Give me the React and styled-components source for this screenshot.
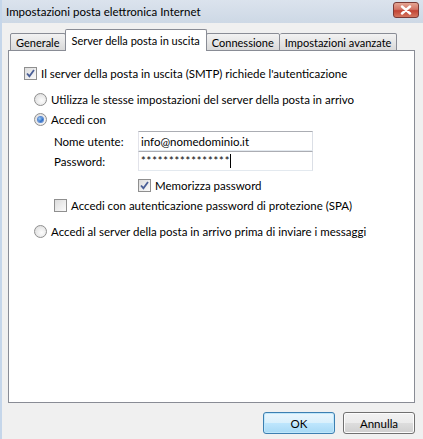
import React from 'react';
import styled, { createGlobalStyle } from 'styled-components';

const GlobalStyle = createGlobalStyle`
  html, body {
    margin: 0;
    padding: 0;
    background: #f0f0f0;
  }
  body {
    font-family: Lato, "Open Sans", sans-serif;
    font-size: 11.5px;
    color: #000;
  }
`;

const Window = styled.div`
  width: 423px;
  height: 439px;
  box-sizing: border-box;
  background: #f0f0f0;
  border-left: 2px solid #c5d6ea;
  display: flex;
  flex-direction: column;
`;

const TitleBar = styled.div`
  height: 23px;
  display: flex;
  align-items: center;
  justify-content: space-between;
  padding: 0 4px 0 4px;
  background: linear-gradient(#dbe3ed, #cdd8e5);
  font-size: 11.5px;
`;

const CloseButton = styled.div`
  width: 26px;
  height: 16px;
  margin-top: -3px;
  box-sizing: border-box;
  border: 1px solid #7a3a36;
  border-radius: 3px;
  background: linear-gradient(#e5a593, #d27567 45%, #c24434 55%, #d5765f);
  display: flex;
  align-items: center;
  justify-content: center;
`;

const Body = styled.div`
  padding: 6px 6px 0 6px;
  display: flex;
  flex-direction: column;
`;

const TabRow = styled.div`
  display: flex;
  align-items: flex-end;
  height: 22px;
  padding-left: 2px;
  margin-bottom: -1px;
  position: relative;
  z-index: 1;
  font-size: 11px;
`;

const Tab = styled.div`
  box-sizing: border-box;
  height: ${p => (p.$active ? '22px' : '18px')};
  padding: ${p => (p.$active ? '0 6px' : '0 5px')};
  margin: ${p => (p.$active ? '0 -1px' : '0')};
  display: flex;
  align-items: center;
  border: 1px solid #898c95;
  border-bottom: ${p => (p.$active ? 'none' : '1px solid #898c95')};
  border-left: ${p => (p.$inner ? 'none' : '1px solid #898c95')};
  border-radius: 2px 2px 0 0;
  background: ${p => (p.$active ? '#fff' : 'linear-gradient(#f2f2f2, #e6e6e6 50%, #d9d9d9)')};
  white-space: nowrap;
  position: relative;
  z-index: ${p => (p.$active ? 2 : 1)};
`;

const Panel = styled.div`
  height: 353px;
  width: 407px;
  box-sizing: border-box;
  background: #fff;
  border: 1px solid #898c95;
  padding-top: 12px;
  display: flex;
  flex-direction: column;
`;

const Row = styled.div`
  height: 20px;
  display: flex;
  align-items: center;
  padding-left: ${p => p.$indent}px;
  margin-top: ${p => p.$space || 0}px;
  white-space: nowrap;
`;

const FieldRow = styled.div`
  display: grid;
  grid-template-columns: 84px 175px;
  align-items: center;
  height: 20px;
  padding-left: 45px;
  margin-top: ${p => p.$space || 0}px;
`;

const Input = styled.div`
  box-sizing: border-box;
  height: 20px;
  border: 1px solid #abadb3;
  border-left-color: #e2e3ea;
  border-right-color: #dbdfe6;
  border-bottom-color: #e3e9ef;
  padding-left: 2px;
  display: flex;
  align-items: center;
`;

const Stars = styled.span`
  font-size: 11px;
  letter-spacing: 0.9px;
  margin-top: -2px;
`;

const Caret = styled.span`
  display: inline-block;
  width: 1px;
  height: 14px;
  background: #000;
`;

const Box = styled.span`
  width: 13px;
  height: 13px;
  box-sizing: border-box;
  border: 1px solid #8f8f8f;
  background: linear-gradient(135deg, #dcdcdc, #fbfbfb);
  margin-right: 4px;
  display: inline-flex;
  align-items: center;
  justify-content: center;
  flex-shrink: 0;
`;

const Radio = styled.span`
  width: 13px;
  height: 13px;
  box-sizing: border-box;
  border-radius: 50%;
  border: 1px solid #8f8f8f;
  background: radial-gradient(circle at 60% 60%, #fdfdfd, #d7d7d7);
  margin-right: 4px;
  display: inline-flex;
  align-items: center;
  justify-content: center;
  flex-shrink: 0;
`;

const Dot = styled.span`
  width: 5px;
  height: 5px;
  border-radius: 50%;
  background: radial-gradient(circle at 35% 35%, #9fd0f7, #1d5fbf 70%);
  box-shadow: 0 0 0 1px #5b8ad3;
`;

const Footer = styled.div`
  display: flex;
  justify-content: flex-end;
  gap: 8px;
  padding: 9px 8px 0 0;
`;

const Button = styled.div`
  width: 72px;
  height: 22px;
  box-sizing: border-box;
  border: 1px solid ${p => (p.$default ? '#3c7fb1' : '#707070')};
  border-radius: 3px;
  background: ${p =>
    p.$default
      ? 'linear-gradient(#eaf6fd, #d9f0fc 50%, #bee6fd 51%, #a7d9f5)'
      : 'linear-gradient(#f2f2f2, #ebebeb 50%, #dddddd 51%, #cfcfcf)'};
  box-shadow: inset 0 0 0 1px ${p => (p.$default ? '#bfe7fb' : '#fcfcfc')};
  display: flex;
  align-items: center;
  justify-content: center;
`;

const Check = () => (
  <svg width="9" height="9" viewBox="0 0 9 9">
    <path d="M1 4.5 L3.4 7.2 L8 1" fill="none" stroke="#4a5f97" strokeWidth="1.8" />
  </svg>
);

const Checkbox = ({ checked }) => <Box>{checked && <Check />}</Box>;

const RadioButton = ({ checked }) => <Radio>{checked && <Dot />}</Radio>;

const App = () => (
  <>
    <GlobalStyle />
    <Window>
      <TitleBar>
        <span>Impostazioni posta elettronica Internet</span>
        <CloseButton>
          <svg width="12" height="10" viewBox="0 0 12 10">
            <path d="M2 1.5 L10 8.5 M10 1.5 L2 8.5" stroke="#fff" strokeWidth="2.4" strokeLinecap="round" />
          </svg>
        </CloseButton>
      </TitleBar>
      <Body>
        <TabRow>
          <Tab>Generale</Tab>
          <Tab $active>Server della posta in uscita</Tab>
          <Tab>Connessione</Tab>
          <Tab $inner>Impostazioni avanzate</Tab>
        </TabRow>
        <Panel>
          <Row $indent={15}>
            <Checkbox checked />
            Il server della posta in uscita (SMTP) richiede l'autenticazione
          </Row>
          <Row $indent={25} $space={6}>
            <RadioButton />
            Utilizza le stesse impostazioni del server della posta in arrivo
          </Row>
          <Row $indent={25}>
            <RadioButton checked />
            Accedi con
          </Row>
          <FieldRow $space={2}>
            <span>Nome utente:</span>
            <Input>info@nomedominio.it</Input>
          </FieldRow>
          <FieldRow>
            <span>Password:</span>
            <Input>
              <Stars>****************</Stars>
              <Caret />
            </Input>
          </FieldRow>
          <Row $indent={129} $space={4}>
            <Checkbox checked />
            Memorizza password
          </Row>
          <Row $indent={45}>
            <Checkbox />
            Accedi con autenticazione password di protezione (SPA)
          </Row>
          <Row $indent={25} $space={6}>
            <RadioButton />
            Accedi al server della posta in arrivo prima di inviare i messaggi
          </Row>
        </Panel>
      </Body>
      <Footer>
        <Button $default>OK</Button>
        <Button>Annulla</Button>
      </Footer>
    </Window>
  </>
);

export default App;
